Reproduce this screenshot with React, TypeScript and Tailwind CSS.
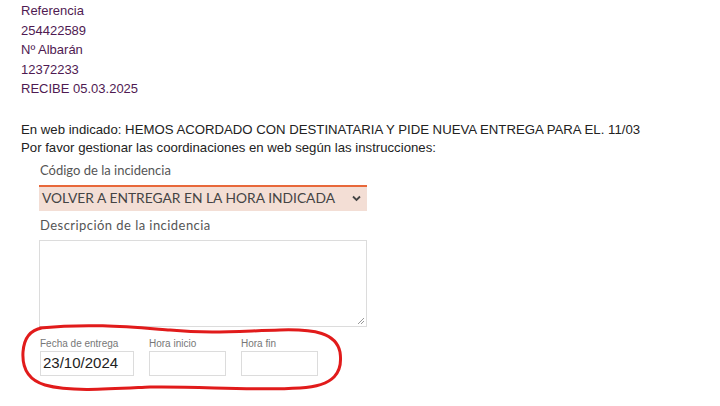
import React from "react";

export default function App() {
  return (
    <div className="relative w-[720px] h-[406px] bg-white overflow-hidden" style={{ fontFamily: '"Liberation Sans", Arial, sans-serif' }}>
      <div className="pl-[21px] pt-[1px] text-[13px] leading-[19.5px] text-[#4f1a52]">
        <div>Referencia</div>
        <div>254422589</div>
        <div>Nº Albarán</div>
        <div>12372233</div>
        <div>RECIBE 05.03.2025</div>
      </div>
      <div className="pl-[21px] pt-[22px] text-[13.2px] leading-[18px] text-[#222]">
        <div>En web indicado: HEMOS ACORDADO CON DESTINATARIA Y PIDE NUEVA ENTREGA PARA EL. 11/03</div>
        <div>Por favor gestionar las coordinaciones en web según las instrucciones:</div>
      </div>
      <div className="pl-[39px] pt-[4px] w-[367px] flex flex-col">
        <div className="text-[13px] leading-[18px] text-[#555] pl-[1px]" style={{ fontFamily: 'Lato, "Open Sans", sans-serif' }}>Código de la incidencia</div>
        <div className="mt-[6px] h-[26px] bg-[#f3ded5] border-t-2 border-[#e8683a] flex items-center justify-between pl-[3px] pr-[6px]" style={{ fontFamily: 'Lato, "Open Sans", sans-serif' }}>
          <span className="text-[13.8px] text-[#444]">VOLVER A ENTREGAR EN LA HORA INDICADA</span>
          <svg width="9" height="7" viewBox="0 0 9 7"><path d="M1 1.5 L4.5 5 L8 1.5" stroke="#444" strokeWidth="1.8" fill="none" /></svg>
        </div>
        <div className="mt-[5px] text-[13px] leading-[18px] text-[#555] pl-[1px] tracking-[0.45px]" style={{ fontFamily: 'Lato, "Open Sans", sans-serif' }}>Descripción de la incidencia</div>
        <div className="mt-[6px] h-[87px] w-[328px] border border-[#dcdcdc] relative">
          <svg className="absolute right-[1px] bottom-[1px]" width="8" height="8" viewBox="0 0 8 8">
            <path d="M7 1 L1 7 M7 4 L4 7" stroke="#999" strokeWidth="1" />
          </svg>
        </div>
        <div className="mt-[11px] flex gap-[15px] pl-[1px]">
          <div className="flex flex-col">
            <div className="text-[10px] leading-[12px] text-[#777]">Fecha de entrega</div>
            <div className="mt-[1px] w-[94px] h-[25px] border border-[#dcdcdc] flex items-center pl-[2px] text-[15px] text-[#222]">23/10/2024</div>
          </div>
          <div className="flex flex-col">
            <div className="text-[10px] leading-[12px] text-[#777]">Hora inicio</div>
            <div className="mt-[1px] w-[77px] h-[25px] border border-[#dcdcdc]"></div>
          </div>
          <div className="flex flex-col">
            <div className="text-[10px] leading-[12px] text-[#777]">Hora fin</div>
            <div className="mt-[1px] w-[77px] h-[25px] border border-[#dcdcdc]"></div>
          </div>
        </div>
      </div>
      <svg className="absolute left-0 top-0 pointer-events-none" width="720" height="406" viewBox="0 0 720 406">
        <path
          d="M40 328 C 90 323, 130 327, 170 330 C 210 334, 240 331, 280 330 C 315 329, 336 333, 340 352 C 343 372, 335 386, 300 388 C 250 391, 200 386, 150 387 C 110 389, 70 392, 45 385 C 28 380, 22 368, 23 352 C 24 338, 30 330, 42 328"
          stroke="#e11b1b"
          strokeWidth="3"
          fill="none"
          strokeLinecap="round"
        />
      </svg>
    </div>
  );
}
